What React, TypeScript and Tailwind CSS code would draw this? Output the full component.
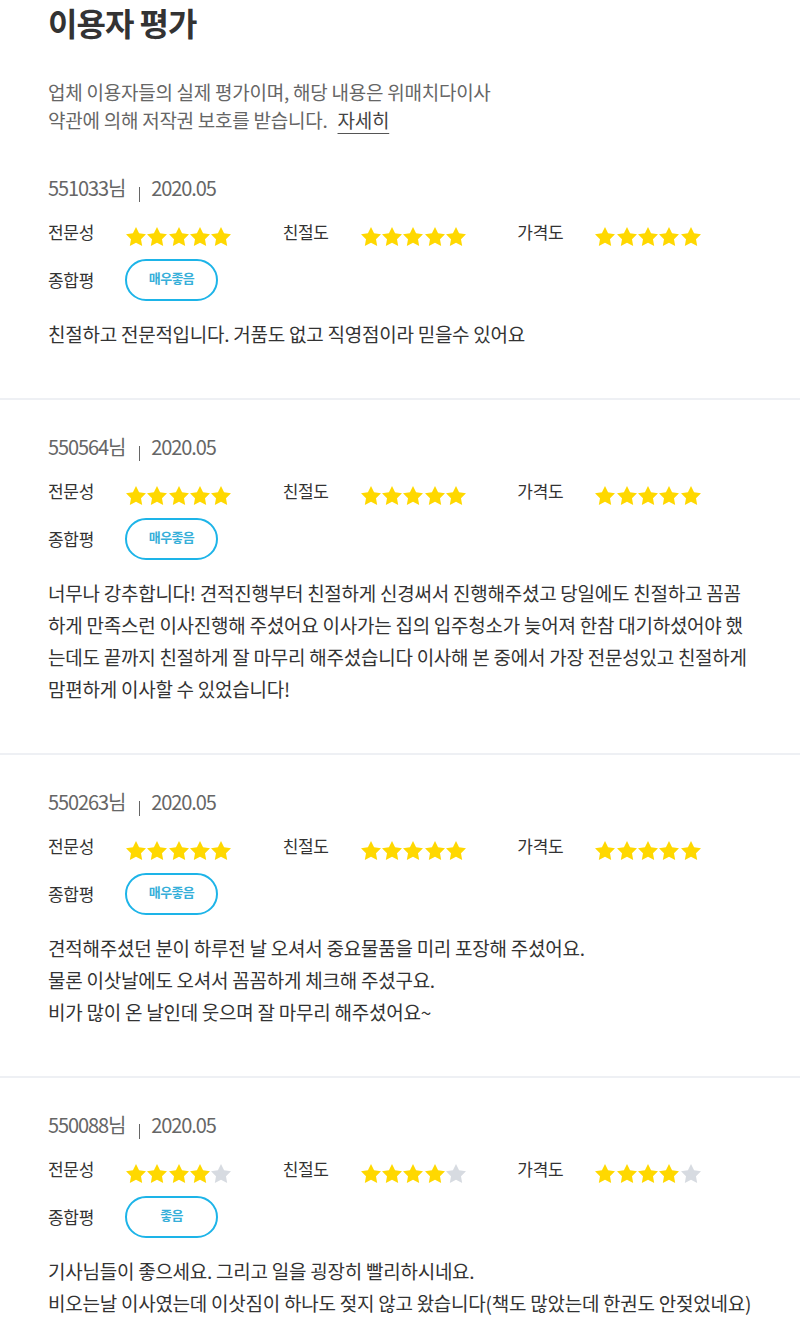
import React from "react";

type Review = {
  id: string;
  date: string;
  scores: [number, number, number];
  overall: string;
  lines: string[];
};

const reviews: Review[] = [
  {
    id: "551033님",
    date: "2020.05",
    scores: [5, 5, 5],
    overall: "매우좋음",
    lines: ["친절하고 전문적입니다. 거품도 없고 직영점이라 믿을수 있어요"],
  },
  {
    id: "550564님",
    date: "2020.05",
    scores: [5, 5, 5],
    overall: "매우좋음",
    lines: [
      "너무나 강추합니다! 견적진행부터 친절하게 신경써서 진행해주셨고 당일에도 친절하고 꼼꼼",
      "하게 만족스런 이사진행해 주셨어요 이사가는 집의 입주청소가 늦어져 한참 대기하셨어야 했",
      "는데도 끝까지 친절하게 잘 마무리 해주셨습니다 이사해 본 중에서 가장 전문성있고 친절하게",
      "맘편하게 이사할 수 있었습니다!",
    ],
  },
  {
    id: "550263님",
    date: "2020.05",
    scores: [5, 5, 5],
    overall: "매우좋음",
    lines: [
      "견적해주셨던 분이 하루전 날 오셔서 중요물품을 미리 포장해 주셨어요.",
      "물론 이삿날에도 오셔서 꼼꼼하게 체크해 주셨구요.",
      "비가 많이 온 날인데 웃으며 잘 마무리 해주셨어요~",
    ],
  },
  {
    id: "550088님",
    date: "2020.05",
    scores: [4, 4, 4],
    overall: "좋음",
    lines: [
      "기사님들이 좋으세요. 그리고 일을 굉장히 빨리하시네요.",
      "비오는날 이사였는데 이삿짐이 하나도 젖지 않고 왔습니다(책도 많았는데 한권도 안젖었네요)",
    ],
  },
];

const labels = ["전문성", "친절도", "가격도"];

function Star({ on }: { on: boolean }) {
  return (
    <svg viewBox="2 2 20 19.02" className="w-5 h-[19px]" aria-hidden="true">
      <path
        d="M12 2l3.09 6.26L22 9.27l-5 4.87 1.18 6.88L12 17.77l-6.18 3.25L7 14.14 2 9.27l6.91-1.01L12 2z"
        fill={on ? "#ffd800" : "#d7dbe1"}
      />
    </svg>
  );
}

function Stars({ n }: { n: number }) {
  return (
    <div className="flex gap-[1.3px] pt-2">
      {[0, 1, 2, 3, 4].map((i) => (
        <Star key={i} on={i < n} />
      ))}
    </div>
  );
}

function ReviewBlock({ r, first }: { r: Review; first: boolean }) {
  return (
    <section
      className={
        first
          ? "px-12 pt-[40px] pb-[48px]"
          : "px-12 pt-[33px] pb-[48px] border-t-2 border-[#eef0f4]"
      }
    >
      <div className="h-[28px] flex items-center text-[20px] tracking-[-1.1px] text-[#666]">
        <span>{r.id}</span>
        <span className="w-px h-[15px] bg-[#666] ml-[14px] mr-[11px] translate-y-[6px]" />
        <span>{r.date}</span>
      </div>
      <div className="mt-[15px] h-[30px] flex">
        {labels.map((l, i) => (
          <div key={l} className="w-[236px] flex items-center">
            <span className="w-[78px] text-[17px] tracking-[-0.3px] text-[#333] leading-[30px]">
              {l}
            </span>
            <Stars n={r.scores[i]} />
          </div>
        ))}
      </div>
      <div className="mt-[12px] flex items-center">
        <span className="w-[77px] text-[17px] tracking-[-0.3px] text-[#333]">종합평</span>
        <div className="w-[93px] h-[42px] rounded-full border-2 border-[#1db4e8] flex items-center justify-center pb-[5px] text-[13px] font-semibold tracking-[-0.6px] text-[#36afd9]">
          {r.overall}
        </div>
      </div>
      <p className="mt-[17px] text-[19px] leading-[32px] tracking-[-0.25px] text-[#333] whitespace-nowrap">
        {r.lines.map((line, i) => (
          <React.Fragment key={i}>
            {i > 0 && <br />}
            {line}
          </React.Fragment>
        ))}
      </p>
    </section>
  );
}

export default function App() {
  return (
    <div className="w-[800px] min-h-[1330px] bg-white font-['Noto_Sans_CJK_KR','Noto_Sans',sans-serif] overflow-hidden">
      <div className="px-12 pt-[2px]">
        <h1 className="text-[32px] leading-[40px] font-bold tracking-[-1px] text-[#333]">
          이용자 평가
        </h1>
        <p className="mt-[36px] text-[19px] leading-[28px] tracking-[-0.25px] text-[#666]">
          업체 이용자들의 실제 평가이며, 해당 내용은 위매치다이사
          <br />
          약관에 의해 저작권 보호를 받습니다.
          <a className="ml-[10px] text-[#444] underline underline-offset-[5px] decoration-[#555]">
            자세히
          </a>
        </p>
      </div>
      {reviews.map((r, i) => (
        <ReviewBlock key={r.id} r={r} first={i === 0} />
      ))}
    </div>
  );
}
